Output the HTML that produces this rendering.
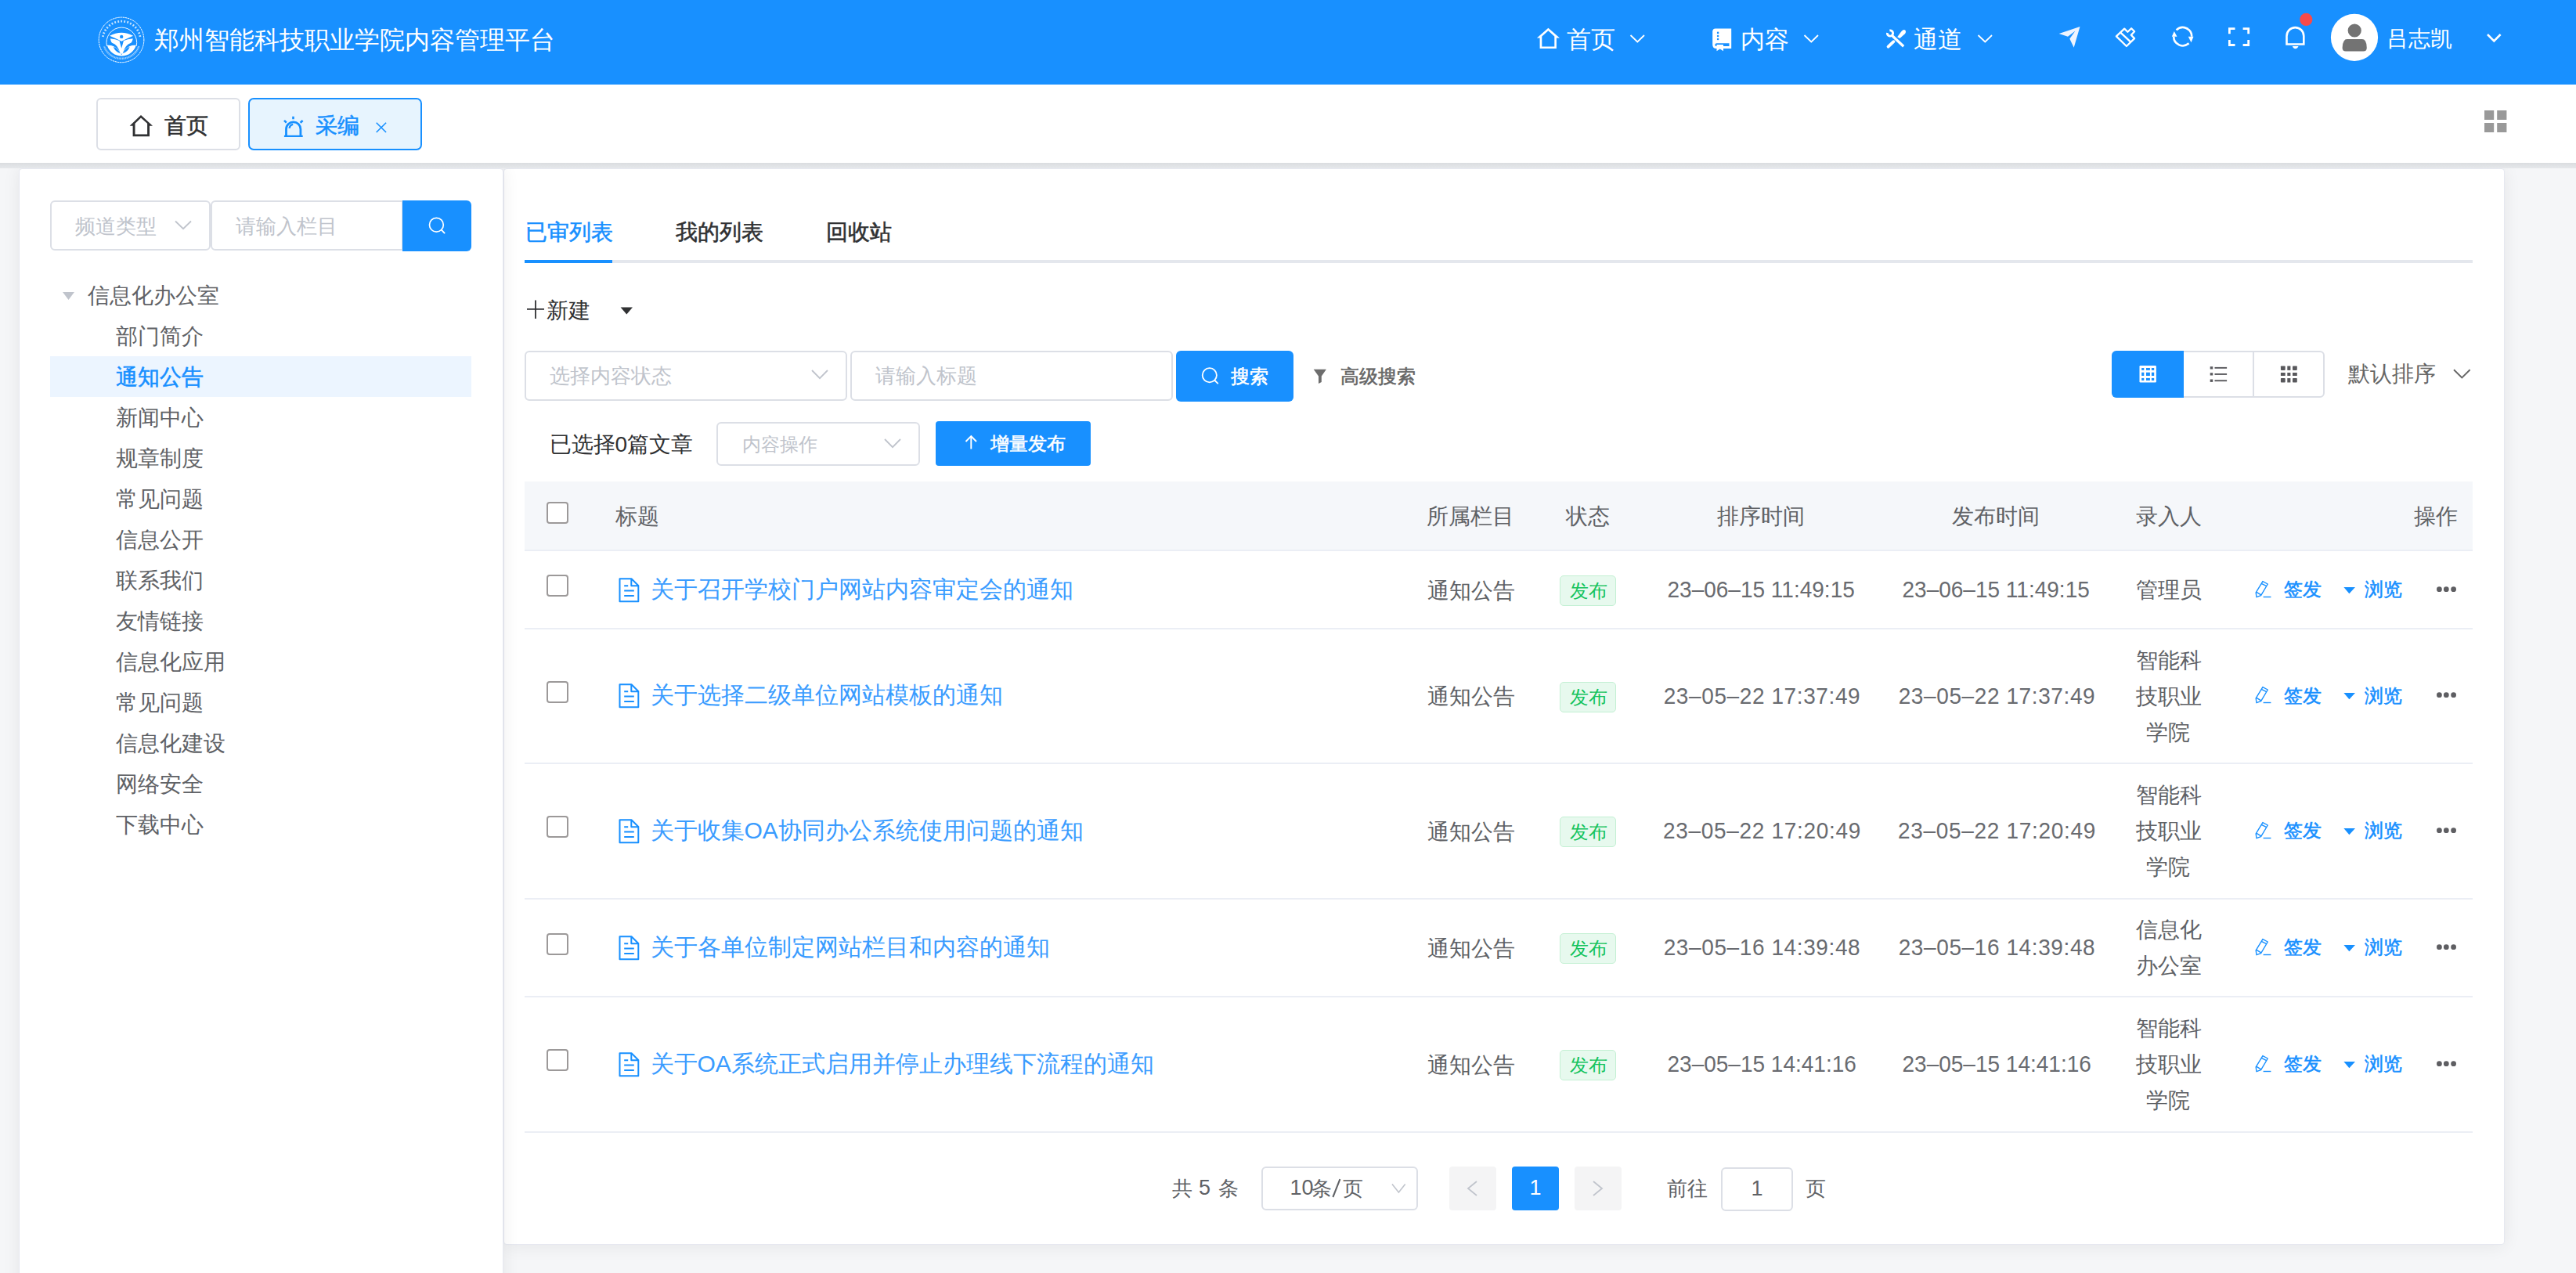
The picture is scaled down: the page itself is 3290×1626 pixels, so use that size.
<!DOCTYPE html><html><head><meta charset="utf-8"><style>
*{box-sizing:border-box;margin:0;padding:0}
html,body{width:3290px;height:1626px;overflow:hidden}
body{position:relative;background:#f5f6f8;font-family:"Liberation Sans",sans-serif;color:#606266}
.a{position:absolute;white-space:nowrap}
svg{position:absolute;overflow:visible}
#hdr{position:absolute;left:0;top:0;width:3290px;height:108px;background:#1890ff}
#tabs{position:absolute;left:0;top:108px;width:3290px;height:100px;background:#fff}
#shade{position:absolute;left:0;top:208px;width:3290px;height:7px;background:linear-gradient(#dadde0,#e6e8eb)}
#left{position:absolute;left:24px;top:215px;width:619px;height:1500px;background:#fff;border-radius:4px;box-shadow:0 0 22px rgba(0,0,0,.07);border:1px solid #e6e8f0}
#main{position:absolute;left:643px;top:215px;width:2556px;height:1375px;background:#fff;border-radius:4px;box-shadow:0 2px 22px rgba(0,0,0,.07);border:1px solid #e6e8f0}
.box{position:absolute;border:2px solid #dcdfe6;border-radius:6px;background:#fff}
</style></head><body>
<div id="hdr"></div>
<svg style="left:120px;top:16px" width="70" height="70" viewBox="0 0 1273 1273">
 <g fill="none" stroke="#fff">
  <circle cx="637" cy="635" r="524" stroke-width="18" stroke-dasharray="46 12"/>
  <path d="M207,564 A440,440 0 0 1 1073,564" stroke-width="50" stroke-dasharray="34 40" opacity=".75"/>
  <path d="M1044,787 A430,430 0 0 1 236,787" stroke-width="44" stroke-dasharray="14 12" opacity=".7"/>
  <path d="M300,780 A352,352 0 1 1 985,780" stroke-width="17"/>
 </g>
 <path fill="#fff" d="M365,540 Q640,395 910,540 Q770,600 640,668 Q510,600 365,540 Z"/>
 <circle cx="640" cy="562" r="40" fill="#1890ff"/>
 <path fill="#fff" d="M380,605 Q500,615 590,655 L640,830 L690,655 Q780,615 905,605 Q885,690 860,705 Q720,745 665,960 L615,960 Q560,745 420,705 Q395,690 380,605 Z"/>
 <path fill="#fff" d="M305,760 A352,352 0 0 0 979,760 Q830,745 715,860 L640,985 L565,860 Q450,745 305,760 Z"/>
 <path fill="#1890ff" d="M450,800 Q550,815 612,950 Q495,915 450,800 Z M830,800 Q730,815 668,950 Q785,915 830,800 Z"/>
</svg>
<div class="a" style="left:196.8px;top:34.6px;font-size:32px;line-height:32px;color:#fff;">郑州智能科技职业学院内容管理平台</div>
<svg style="left:1962px;top:35px" width="31" height="28" viewBox="0 0 31 28"><path fill="#fff" fill-rule="evenodd" d="M15.4,0.8 L30,13.6 L25.9,13.6 L25.9,27 L4.6,27 L4.6,13.6 L0.9,13.6 Z M15.4,4.2 L7.3,11.6 L7.3,24.4 L23.3,24.4 L23.3,11.6 Z"/></svg>
<div class="a" style="left:2000.5px;top:35.1px;font-size:31px;line-height:31px;color:#fff;">首页</div>
<svg style="left:2080px;top:43px" width="22" height="13" viewBox="0 0 22 13"><path d="M2.5,2 L11.3,10.5 L20,2" fill="none" stroke="#fff" stroke-width="1.8"/></svg>
<svg style="left:2186px;top:36px" width="27" height="30" viewBox="0 0 27 30">
 <path fill="#fff" d="M5,0.6 L25.2,0.6 L25.2,26 L6,26 Q1.2,26 1.2,21 L1.2,4.6 Q1.2,0.6 5,0.6 Z"/>
 <circle cx="8.1" cy="5.9" r="1.3" fill="#1890ff"/><circle cx="8.1" cy="10" r="1.3" fill="#1890ff"/><circle cx="8.1" cy="14" r="1.3" fill="#1890ff"/>
 <path fill="#1890ff" d="M6.5,19.3 L22.5,19.3 L22.5,23 L6.5,23 Q4.4,23 4.4,21.15 Q4.4,19.3 6.5,19.3 Z"/>
 <path fill="#fff" d="M6.5,21 L15,21 L15,29.2 L10.75,26.6 L6.5,29.2 Z"/>
</svg>
<div class="a" style="left:2223.3px;top:35.1px;font-size:31px;line-height:31px;color:#fff;">内容</div>
<svg style="left:2302px;top:43px" width="22" height="13" viewBox="0 0 22 13"><path d="M2.5,2 L11.3,10.5 L20,2" fill="none" stroke="#fff" stroke-width="1.8"/></svg>
<svg style="left:2405px;top:35px" width="32" height="30" viewBox="2405 35 32 30">
 <path d="M2413.4,38.95 A3.6,3.6 0 1 1 2410.45,41.9" fill="none" stroke="#fff" stroke-width="2.9"/>
 <path d="M2416.3,45.3 L2431.2,59.2" stroke="#fff" stroke-width="3.3"/>
 <path d="M2423.2,47.2 L2428.3,40.3 Q2431.3,37 2433.4,38.7 Q2435,40.8 2432.6,43.6 L2426.4,48.9 Z" fill="#fff"/>
 <path d="M2411.6,59.6 L2418.4,53.2" stroke="#fff" stroke-width="3.9" stroke-linecap="round"/>
</svg>
<div class="a" style="left:2444.2px;top:35.1px;font-size:31px;line-height:31px;color:#fff;">通道</div>
<svg style="left:2524px;top:43px" width="22" height="13" viewBox="0 0 22 13"><path d="M2.5,2 L11.3,10.5 L20,2" fill="none" stroke="#fff" stroke-width="1.8"/></svg>
<svg style="left:2620px;top:20px" width="200" height="55" viewBox="2620 20 200 55">
 <path fill="#eef4ff" d="M2656.5,34 L2629.7,42.9 L2641,46.8 L2650.5,39.5 L2643.3,49.5 L2648.7,60.8 Z"/>
 <path fill="none" stroke="#fff" stroke-width="2.3" stroke-linejoin="round" d="M2702.9,46.4 L2713.2,36.6 L2717.4,40.8 L2722.1,36.2 L2726.1,40.2 L2721.8,44.7 L2726.1,49.1 L2715.9,59 Z"/>
 <path stroke="#fff" stroke-width="2.3" d="M2708.4,41.7 L2721.2,53.6"/>
 <path fill="none" stroke="#fff" stroke-width="2.6" d="M2779.6,38.4 A11.5,11.5 0 0 1 2799.2,46.8"/>
 <path fill="none" stroke="#fff" stroke-width="2.6" d="M2795.5,55.3 A11.5,11.5 0 0 1 2776.2,46.8"/>
 <path fill="#fff" d="M2776.8,40 L2780.5,46.8 L2773.8,46.8 Z M2798.5,54.2 L2794.8,46.8 L2801.5,46.8 Z"/>
</svg>
<svg style="left:2840px;top:30px" width="40" height="35" viewBox="2840 30 40 35">
 <path fill="none" stroke="#fff" stroke-width="2.8" d="M2847.4,43.2 L2847.4,36.6 L2854.5,36.6 M2864.6,36.6 L2871.7,36.6 L2871.7,43.2 M2871.7,51 L2871.7,57.5 L2864.6,57.5 M2854.5,57.5 L2847.4,57.5 L2847.4,51"/>
</svg>
<svg style="left:2910px;top:10px" width="50" height="60" viewBox="2910 10 50 60">
 <path fill="none" stroke="#fff" stroke-width="2.6" d="M2920.5,56.5 L2920.5,46 A10.9,10.9 0 0 1 2942.3,46 L2942.3,56.5 Z"/>
 <path fill="#fff" d="M2927.8,59.1 L2935.5,59.1 Q2934.5,62.2 2931.6,62.2 Q2928.8,62.2 2927.8,59.1 Z"/>
 <circle cx="2945.3" cy="24.9" r="8.1" fill="#f74a4a"/>
</svg>
<svg style="left:2970px;top:10px" width="80" height="80" viewBox="2970 10 80 80">
 <circle cx="3007" cy="47.8" r="30.1" fill="#fff"/>
 <circle cx="3007.2" cy="39" r="8.6" fill="#737373"/>
 <path fill="#737373" d="M2997.5,50.1 L3016.8,50.1 Q3019.5,50.1 3021,52.5 Q3022.8,55.5 3022.8,61 Q3022.8,65.5 3018.5,65.5 L2996,65.5 Q2991.6,65.5 2991.6,61 Q2991.6,55.5 2993.6,52.5 Q2995,50.1 2997.5,50.1 Z"/>
</svg>
<div class="a" style="left:3047.5px;top:35.8px;font-size:28px;line-height:28px;color:#fff;">吕志凯</div>
<svg style="left:3172px;top:40px" width="26" height="17" viewBox="0 0 26 17"><path d="M5,4 L13.3,12.3 L21.6,4" fill="none" stroke="#fff" stroke-width="2.6"/></svg>
<div id="main"></div>
<div class="a" style="left:671.4px;top:283.3px;font-size:28px;line-height:28px;color:#1890ff;-webkit-text-stroke:0.55px currentColor;">已审列表</div>
<div class="a" style="left:862.5px;top:283.3px;font-size:28px;line-height:28px;color:#303133;-webkit-text-stroke:0.55px currentColor;">我的列表</div>
<div class="a" style="left:1055.3px;top:283.3px;font-size:28px;line-height:28px;color:#303133;-webkit-text-stroke:0.55px currentColor;">回收站</div>
<div class="a" style="left:670px;top:332px;width:2488px;height:4px;background:#e4e7ed"></div>
<div class="a" style="left:670px;top:332px;width:112px;height:4px;background:#1890ff"></div>
<svg style="left:670px;top:380px" width="30" height="30" viewBox="670 380 30 30"><path d="M673,394.8 L695,394.8 M684,383.4 L684,407" stroke="#303133" stroke-width="1.8"/></svg>
<div class="a" style="left:698.0px;top:382.7px;font-size:28px;line-height:28px;color:#303133;">新建</div>
<svg style="left:790px;top:390px" width="20" height="14" viewBox="790 390 20 14"><path d="M792.6,392.6 L808,392.6 L800.3,401.6 Z" fill="#303133"/></svg>
<div class="box" style="left:670px;top:448px;width:412px;height:64px"></div>
<div class="a" style="left:702.0px;top:467.3px;font-size:26px;line-height:26px;color:#c0c4cc;">选择内容状态</div>
<svg style="left:1034px;top:470px" width="26" height="18" viewBox="0 0 26 18"><path d="M3,3 L13,13.2 L23,3" fill="none" stroke="#c0c4cc" stroke-width="1.8"/></svg>
<div class="box" style="left:1086px;top:448px;width:412px;height:64px"></div>
<div class="a" style="left:1118.0px;top:467.3px;font-size:26px;line-height:26px;color:#c0c4cc;">请输入标题</div>
<div class="a" style="left:1502px;top:448px;width:150px;height:65px;background:#1890ff;border-radius:6px"></div>
<svg style="left:1530px;top:465px" width="30" height="30" viewBox="1530 465 30 30"><circle cx="1544.8" cy="479.3" r="9.1" fill="none" stroke="#fff" stroke-width="1.8"/><path d="M1551.5,486 L1555.3,489.6" stroke="#fff" stroke-width="1.9" stroke-linecap="round"/></svg>
<div class="a" style="left:1571.8px;top:468.7px;font-size:24px;line-height:24px;color:#fff;-webkit-text-stroke:0.55px currentColor;">搜索</div>
<svg style="left:1675px;top:469px" width="22" height="24" viewBox="1675 469 22 24"><path d="M1677.7,471.8 L1693.9,471.8 L1687.8,480.5 L1687.8,488 L1684,490 L1684,480.5 Z" fill="#6d6d6d"/></svg>
<div class="a" style="left:1712.0px;top:469.3px;font-size:24px;line-height:24px;color:#666;-webkit-text-stroke:0.55px currentColor;">高级搜索</div>
<div class="a" style="left:2697px;top:448px;width:272px;height:60px;border:2px solid #dcdfe6;border-radius:6px;background:#fff"></div>
<div class="a" style="left:2697px;top:448px;width:92px;height:60px;background:#1890ff;border-radius:6px 0 0 6px"></div>
<div class="a" style="left:2877px;top:449px;width:2px;height:58px;background:#dcdfe6"></div>
<svg style="left:2730px;top:465px" width="26" height="26" viewBox="2730 465 26 26">
 <rect x="2732.5" y="467" width="21.4" height="21.5" rx="1.2" fill="#fff"/>
 <g fill="#1890ff">
 <rect x="2735.2" y="470" width="3.1" height="2.9"/><rect x="2741" y="470" width="4.9" height="2.9"/><rect x="2747.9" y="470" width="3.3" height="2.9"/>
 <rect x="2735.2" y="475.7" width="3.1" height="4.3"/><rect x="2741" y="475.7" width="4.9" height="4.3"/><rect x="2747.9" y="475.7" width="3.3" height="4.3"/>
 <rect x="2735.2" y="482.9" width="3.1" height="3.1"/><rect x="2741" y="482.9" width="4.9" height="3.1"/><rect x="2747.9" y="482.9" width="3.3" height="3.1"/>
 </g>
</svg>
<svg style="left:2820px;top:465px" width="28" height="26" viewBox="2820 465 28 26">
 <g fill="#58585c">
 <rect x="2822.7" y="468.2" width="3.5" height="3.3"/><rect x="2822.7" y="476.2" width="3.5" height="3.3"/><rect x="2822.7" y="484.5" width="3.5" height="3.4"/>
 <rect x="2828.5" y="468.9" width="15.6" height="1.9"/><rect x="2828.5" y="477" width="15.6" height="1.9"/><rect x="2828.5" y="485.3" width="15.6" height="1.9"/>
 </g>
</svg>
<svg style="left:2910px;top:465px" width="26" height="26" viewBox="2910 465 26 26">
 <g fill="#58585c">
 <rect x="2912.9" y="467.5" width="5.8" height="5.4" rx=".8"/><rect x="2921.3" y="467.5" width="4.1" height="5.4"/><rect x="2928" y="467.5" width="5.8" height="5.4" rx=".8"/>
 <rect x="2912.9" y="476" width="5.8" height="4"/><rect x="2921.3" y="476" width="4.1" height="4"/><rect x="2928" y="476" width="5.8" height="4"/>
 <rect x="2912.9" y="483.1" width="5.8" height="5.4" rx=".8"/><rect x="2921.3" y="483.1" width="4.1" height="5.4"/><rect x="2928" y="483.1" width="5.8" height="5.4" rx=".8"/>
 </g>
</svg>
<div class="a" style="left:2999.3px;top:463.6px;font-size:28px;line-height:28px;color:#666;">默认排序</div>
<svg style="left:3131px;top:469px" width="28" height="17" viewBox="3131 469 28 17"><path d="M3134,472.3 L3144.3,482.4 L3154.6,472.3" fill="none" stroke="#666" stroke-width="1.9"/></svg>
<div class="a" style="left:701.5px;top:554.3px;font-size:28px;line-height:28px;color:#303133;">已选择0篇文章</div>
<div class="box" style="left:915px;top:539px;width:260px;height:56px"></div>
<div class="a" style="left:947.7px;top:555.7px;font-size:24px;line-height:24px;color:#c0c4cc;">内容操作</div>
<svg style="left:1127px;top:558px" width="26" height="18" viewBox="0 0 26 18"><path d="M3,3 L13,13.2 L23,3" fill="none" stroke="#c0c4cc" stroke-width="1.8"/></svg>
<div class="a" style="left:1195px;top:538px;width:198px;height:57px;background:#1890ff;border-radius:4px"></div>
<svg style="left:1230px;top:553px" width="22" height="24" viewBox="1230 553 22 24"><path d="M1240.3,573.6 L1240.3,557.5 M1233.5,564 L1240.3,557 L1247,564" fill="none" stroke="#fff" stroke-width="1.9"/></svg>
<div class="a" style="left:1264.6px;top:555.3px;font-size:24px;line-height:24px;color:#fff;-webkit-text-stroke:0.55px currentColor;">增量发布</div>
<div class="a" style="left:670px;top:615px;width:2488px;height:88px;background:#f5f7fa"></div>
<div class="a" style="left:670px;top:702px;width:2488px;height:2px;background:#ebeef5"></div>
<div class="a" style="left:698px;top:641px;width:28px;height:28px;border:2px solid #9c9999;border-radius:4px;background:#fff"></div>
<div class="a" style="left:786.0px;top:645.8px;font-size:28px;line-height:28px;color:#606266;">标题</div>
<div class="a" style="left:1822.0px;top:645.8px;font-size:28px;line-height:28px;color:#606266;">所属栏目</div>
<div class="a" style="left:2000.0px;top:645.8px;font-size:28px;line-height:28px;color:#606266;">状态</div>
<div class="a" style="left:2192.5px;top:645.8px;font-size:28px;line-height:28px;color:#606266;">排序时间</div>
<div class="a" style="left:2492.9px;top:645.8px;font-size:28px;line-height:28px;color:#606266;">发布时间</div>
<div class="a" style="left:2727.5px;top:645.8px;font-size:28px;line-height:28px;color:#606266;">录入人</div>
<div class="a" style="left:3082.7px;top:645.8px;font-size:28px;line-height:28px;color:#606266;">操作</div>
<div class="a" style="left:670px;top:802px;width:2488px;height:2px;background:#ebeef5"></div>
<div class="a" style="left:698px;top:734px;width:28px;height:28px;border:2px solid #9c9999;border-radius:4px;background:#fff"></div>
<svg style="left:788px;top:736.5px" width="32" height="34" viewBox="0 0 32 34"><path fill="none" stroke="#1890ff" stroke-width="2" stroke-linejoin="round" d="M3.5,2.3 L18.5,2.3 L27.3,11 L27.3,31.3 L3.5,31.3 Z M18.3,2.5 L18.3,11.2 L27.2,11.2"/><path stroke="#1890ff" stroke-width="2" d="M9.2,11.3 L14.2,11.3 M9.2,17.6 L21.8,17.6 M9.2,23.9 L21.8,23.9"/></svg>
<div class="a" style="left:830.5px;top:737.7px;font-size:30px;line-height:30px;color:#3a9cff;">关于召开学校门户网站内容审定会的通知</div>
<div class="a" style="left:1823.0px;top:740.6px;font-size:28px;line-height:28px;color:#606266;">通知公告</div>
<div class="a" style="left:1992px;top:735.4px;width:72px;height:39px;background:#e7f9ee;border:1.5px solid #c3f0d3;border-radius:5px"></div>
<div class="a" style="left:2004.7px;top:743.2px;font-size:24px;line-height:24px;color:#13c35c;">发布</div>
<div class="a" style="left:2129.5px;top:739.0999999999999px;font-size:28px;line-height:28px;letter-spacing:0.0px;color:#696b70;transform:scaleY(1.06);transform-origin:0 13.5px">23–06–15 11:49:15</div>
<div class="a" style="left:2429.5px;top:739.0999999999999px;font-size:28px;line-height:28px;letter-spacing:0.0px;color:#696b70;transform:scaleY(1.06);transform-origin:0 13.5px">23–06–15 11:49:15</div>
<div class="a" style="left:2727.5px;top:740.1px;font-size:28px;line-height:28px;color:#606266;">管理员</div>
<svg style="left:2878px;top:739.5px" width="26" height="26" viewBox="0 0 26 26"><path fill="none" stroke="#1890ff" stroke-width="1.4" stroke-linejoin="round" d="M11.9,2.6 L18.3,6 L9.6,20.6 L4,22.7 L3.2,16.8 Z M4,16.3 L9.8,19.9 M10.3,5.3 L16.7,8.7"/><path stroke="#1890ff" stroke-width="1.4" d="M12.6,22.5 L22.4,22.5"/></svg>
<div class="a" style="left:2916.8px;top:741.3px;font-size:24px;line-height:24px;color:#1890ff;-webkit-text-stroke:0.55px currentColor;">签发</div>
<svg style="left:2990px;top:747.5px" width="20" height="12" viewBox="0 0 20 12"><path d="M3.4,2.1 L18,2.1 L10.4,10.3 Z" fill="#1890ff"/></svg>
<div class="a" style="left:3020.3px;top:741.3px;font-size:24px;line-height:24px;color:#1890ff;-webkit-text-stroke:0.55px currentColor;">浏览</div>
<svg style="left:3108px;top:744.5px" width="32" height="16" viewBox="0 0 32 16"><g fill="#5e5e62"><circle cx="7.4" cy="7.7" r="3.4"/><circle cx="16.3" cy="7.7" r="3.4"/><circle cx="25.6" cy="7.7" r="3.4"/></g></svg>
<div class="a" style="left:670px;top:974px;width:2488px;height:2px;background:#ebeef5"></div>
<div class="a" style="left:698px;top:870px;width:28px;height:28px;border:2px solid #9c9999;border-radius:4px;background:#fff"></div>
<svg style="left:788px;top:872.0px" width="32" height="34" viewBox="0 0 32 34"><path fill="none" stroke="#1890ff" stroke-width="2" stroke-linejoin="round" d="M3.5,2.3 L18.5,2.3 L27.3,11 L27.3,31.3 L3.5,31.3 Z M18.3,2.5 L18.3,11.2 L27.2,11.2"/><path stroke="#1890ff" stroke-width="2" d="M9.2,11.3 L14.2,11.3 M9.2,17.6 L21.8,17.6 M9.2,23.9 L21.8,23.9"/></svg>
<div class="a" style="left:830.5px;top:873.2px;font-size:30px;line-height:30px;color:#3a9cff;">关于选择二级单位网站模板的通知</div>
<div class="a" style="left:1823.0px;top:876.1px;font-size:28px;line-height:28px;color:#606266;">通知公告</div>
<div class="a" style="left:1992px;top:870.9px;width:72px;height:39px;background:#e7f9ee;border:1.5px solid #c3f0d3;border-radius:5px"></div>
<div class="a" style="left:2004.7px;top:878.7px;font-size:24px;line-height:24px;color:#13c35c;">发布</div>
<div class="a" style="left:2124.7px;top:874.5999999999999px;font-size:28px;line-height:28px;letter-spacing:0.6px;color:#696b70;transform:scaleY(1.06);transform-origin:0 13.5px">23–05–22 17:37:49</div>
<div class="a" style="left:2424.7px;top:874.5999999999999px;font-size:28px;line-height:28px;letter-spacing:0.6px;color:#696b70;transform:scaleY(1.06);transform-origin:0 13.5px">23–05–22 17:37:49</div>
<div class="a" style="left:2727.5px;top:829.6px;font-size:28px;line-height:28px;color:#606266;">智能科</div>
<div class="a" style="left:2727.5px;top:875.6px;font-size:28px;line-height:28px;color:#606266;">技职业</div>
<div class="a" style="left:2741.0px;top:921.6px;font-size:28px;line-height:28px;color:#606266;">学院</div>
<svg style="left:2878px;top:875.0px" width="26" height="26" viewBox="0 0 26 26"><path fill="none" stroke="#1890ff" stroke-width="1.4" stroke-linejoin="round" d="M11.9,2.6 L18.3,6 L9.6,20.6 L4,22.7 L3.2,16.8 Z M4,16.3 L9.8,19.9 M10.3,5.3 L16.7,8.7"/><path stroke="#1890ff" stroke-width="1.4" d="M12.6,22.5 L22.4,22.5"/></svg>
<div class="a" style="left:2916.8px;top:876.8px;font-size:24px;line-height:24px;color:#1890ff;-webkit-text-stroke:0.55px currentColor;">签发</div>
<svg style="left:2990px;top:883.0px" width="20" height="12" viewBox="0 0 20 12"><path d="M3.4,2.1 L18,2.1 L10.4,10.3 Z" fill="#1890ff"/></svg>
<div class="a" style="left:3020.3px;top:876.8px;font-size:24px;line-height:24px;color:#1890ff;-webkit-text-stroke:0.55px currentColor;">浏览</div>
<svg style="left:3108px;top:880.0px" width="32" height="16" viewBox="0 0 32 16"><g fill="#5e5e62"><circle cx="7.4" cy="7.7" r="3.4"/><circle cx="16.3" cy="7.7" r="3.4"/><circle cx="25.6" cy="7.7" r="3.4"/></g></svg>
<div class="a" style="left:670px;top:1147px;width:2488px;height:2px;background:#ebeef5"></div>
<div class="a" style="left:698px;top:1042px;width:28px;height:28px;border:2px solid #9c9999;border-radius:4px;background:#fff"></div>
<svg style="left:788px;top:1044.5px" width="32" height="34" viewBox="0 0 32 34"><path fill="none" stroke="#1890ff" stroke-width="2" stroke-linejoin="round" d="M3.5,2.3 L18.5,2.3 L27.3,11 L27.3,31.3 L3.5,31.3 Z M18.3,2.5 L18.3,11.2 L27.2,11.2"/><path stroke="#1890ff" stroke-width="2" d="M9.2,11.3 L14.2,11.3 M9.2,17.6 L21.8,17.6 M9.2,23.9 L21.8,23.9"/></svg>
<div class="a" style="left:830.5px;top:1045.7px;font-size:30px;line-height:30px;color:#3a9cff;">关于收集OA协同办公系统使用问题的通知</div>
<div class="a" style="left:1823.0px;top:1048.6px;font-size:28px;line-height:28px;color:#606266;">通知公告</div>
<div class="a" style="left:1992px;top:1043.4px;width:72px;height:39px;background:#e7f9ee;border:1.5px solid #c3f0d3;border-radius:5px"></div>
<div class="a" style="left:2004.7px;top:1051.2px;font-size:24px;line-height:24px;color:#13c35c;">发布</div>
<div class="a" style="left:2123.9px;top:1047.1px;font-size:28px;line-height:28px;letter-spacing:0.7px;color:#696b70;transform:scaleY(1.06);transform-origin:0 13.5px">23–05–22 17:20:49</div>
<div class="a" style="left:2423.9px;top:1047.1px;font-size:28px;line-height:28px;letter-spacing:0.7px;color:#696b70;transform:scaleY(1.06);transform-origin:0 13.5px">23–05–22 17:20:49</div>
<div class="a" style="left:2727.5px;top:1002.1px;font-size:28px;line-height:28px;color:#606266;">智能科</div>
<div class="a" style="left:2727.5px;top:1048.1px;font-size:28px;line-height:28px;color:#606266;">技职业</div>
<div class="a" style="left:2741.0px;top:1094.1px;font-size:28px;line-height:28px;color:#606266;">学院</div>
<svg style="left:2878px;top:1047.5px" width="26" height="26" viewBox="0 0 26 26"><path fill="none" stroke="#1890ff" stroke-width="1.4" stroke-linejoin="round" d="M11.9,2.6 L18.3,6 L9.6,20.6 L4,22.7 L3.2,16.8 Z M4,16.3 L9.8,19.9 M10.3,5.3 L16.7,8.7"/><path stroke="#1890ff" stroke-width="1.4" d="M12.6,22.5 L22.4,22.5"/></svg>
<div class="a" style="left:2916.8px;top:1049.3px;font-size:24px;line-height:24px;color:#1890ff;-webkit-text-stroke:0.55px currentColor;">签发</div>
<svg style="left:2990px;top:1055.5px" width="20" height="12" viewBox="0 0 20 12"><path d="M3.4,2.1 L18,2.1 L10.4,10.3 Z" fill="#1890ff"/></svg>
<div class="a" style="left:3020.3px;top:1049.3px;font-size:24px;line-height:24px;color:#1890ff;-webkit-text-stroke:0.55px currentColor;">浏览</div>
<svg style="left:3108px;top:1052.5px" width="32" height="16" viewBox="0 0 32 16"><g fill="#5e5e62"><circle cx="7.4" cy="7.7" r="3.4"/><circle cx="16.3" cy="7.7" r="3.4"/><circle cx="25.6" cy="7.7" r="3.4"/></g></svg>
<div class="a" style="left:670px;top:1272px;width:2488px;height:2px;background:#ebeef5"></div>
<div class="a" style="left:698px;top:1192px;width:28px;height:28px;border:2px solid #9c9999;border-radius:4px;background:#fff"></div>
<svg style="left:788px;top:1193.5px" width="32" height="34" viewBox="0 0 32 34"><path fill="none" stroke="#1890ff" stroke-width="2" stroke-linejoin="round" d="M3.5,2.3 L18.5,2.3 L27.3,11 L27.3,31.3 L3.5,31.3 Z M18.3,2.5 L18.3,11.2 L27.2,11.2"/><path stroke="#1890ff" stroke-width="2" d="M9.2,11.3 L14.2,11.3 M9.2,17.6 L21.8,17.6 M9.2,23.9 L21.8,23.9"/></svg>
<div class="a" style="left:830.5px;top:1194.7px;font-size:30px;line-height:30px;color:#3a9cff;">关于各单位制定网站栏目和内容的通知</div>
<div class="a" style="left:1823.0px;top:1197.6px;font-size:28px;line-height:28px;color:#606266;">通知公告</div>
<div class="a" style="left:1992px;top:1192.4px;width:72px;height:39px;background:#e7f9ee;border:1.5px solid #c3f0d3;border-radius:5px"></div>
<div class="a" style="left:2004.7px;top:1200.2px;font-size:24px;line-height:24px;color:#13c35c;">发布</div>
<div class="a" style="left:2124.7px;top:1196.1px;font-size:28px;line-height:28px;letter-spacing:0.6px;color:#696b70;transform:scaleY(1.06);transform-origin:0 13.5px">23–05–16 14:39:48</div>
<div class="a" style="left:2424.7px;top:1196.1px;font-size:28px;line-height:28px;letter-spacing:0.6px;color:#696b70;transform:scaleY(1.06);transform-origin:0 13.5px">23–05–16 14:39:48</div>
<div class="a" style="left:2727.5px;top:1174.1px;font-size:28px;line-height:28px;color:#606266;">信息化</div>
<div class="a" style="left:2727.5px;top:1220.1px;font-size:28px;line-height:28px;color:#606266;">办公室</div>
<svg style="left:2878px;top:1196.5px" width="26" height="26" viewBox="0 0 26 26"><path fill="none" stroke="#1890ff" stroke-width="1.4" stroke-linejoin="round" d="M11.9,2.6 L18.3,6 L9.6,20.6 L4,22.7 L3.2,16.8 Z M4,16.3 L9.8,19.9 M10.3,5.3 L16.7,8.7"/><path stroke="#1890ff" stroke-width="1.4" d="M12.6,22.5 L22.4,22.5"/></svg>
<div class="a" style="left:2916.8px;top:1198.3px;font-size:24px;line-height:24px;color:#1890ff;-webkit-text-stroke:0.55px currentColor;">签发</div>
<svg style="left:2990px;top:1204.5px" width="20" height="12" viewBox="0 0 20 12"><path d="M3.4,2.1 L18,2.1 L10.4,10.3 Z" fill="#1890ff"/></svg>
<div class="a" style="left:3020.3px;top:1198.3px;font-size:24px;line-height:24px;color:#1890ff;-webkit-text-stroke:0.55px currentColor;">浏览</div>
<svg style="left:3108px;top:1201.5px" width="32" height="16" viewBox="0 0 32 16"><g fill="#5e5e62"><circle cx="7.4" cy="7.7" r="3.4"/><circle cx="16.3" cy="7.7" r="3.4"/><circle cx="25.6" cy="7.7" r="3.4"/></g></svg>
<div class="a" style="left:670px;top:1445px;width:2488px;height:2px;background:#ebeef5"></div>
<div class="a" style="left:698px;top:1340px;width:28px;height:28px;border:2px solid #9c9999;border-radius:4px;background:#fff"></div>
<svg style="left:788px;top:1342.5px" width="32" height="34" viewBox="0 0 32 34"><path fill="none" stroke="#1890ff" stroke-width="2" stroke-linejoin="round" d="M3.5,2.3 L18.5,2.3 L27.3,11 L27.3,31.3 L3.5,31.3 Z M18.3,2.5 L18.3,11.2 L27.2,11.2"/><path stroke="#1890ff" stroke-width="2" d="M9.2,11.3 L14.2,11.3 M9.2,17.6 L21.8,17.6 M9.2,23.9 L21.8,23.9"/></svg>
<div class="a" style="left:830.5px;top:1343.7px;font-size:30px;line-height:30px;color:#3a9cff;">关于OA系统正式启用并停止办理线下流程的通知</div>
<div class="a" style="left:1823.0px;top:1346.6px;font-size:28px;line-height:28px;color:#606266;">通知公告</div>
<div class="a" style="left:1992px;top:1341.4px;width:72px;height:39px;background:#e7f9ee;border:1.5px solid #c3f0d3;border-radius:5px"></div>
<div class="a" style="left:2004.7px;top:1349.2px;font-size:24px;line-height:24px;color:#13c35c;">发布</div>
<div class="a" style="left:2129.5px;top:1345.1px;font-size:28px;line-height:28px;letter-spacing:0.0px;color:#696b70;transform:scaleY(1.06);transform-origin:0 13.5px">23–05–15 14:41:16</div>
<div class="a" style="left:2429.5px;top:1345.1px;font-size:28px;line-height:28px;letter-spacing:0.0px;color:#696b70;transform:scaleY(1.06);transform-origin:0 13.5px">23–05–15 14:41:16</div>
<div class="a" style="left:2727.5px;top:1300.1px;font-size:28px;line-height:28px;color:#606266;">智能科</div>
<div class="a" style="left:2727.5px;top:1346.1px;font-size:28px;line-height:28px;color:#606266;">技职业</div>
<div class="a" style="left:2741.0px;top:1392.1px;font-size:28px;line-height:28px;color:#606266;">学院</div>
<svg style="left:2878px;top:1345.5px" width="26" height="26" viewBox="0 0 26 26"><path fill="none" stroke="#1890ff" stroke-width="1.4" stroke-linejoin="round" d="M11.9,2.6 L18.3,6 L9.6,20.6 L4,22.7 L3.2,16.8 Z M4,16.3 L9.8,19.9 M10.3,5.3 L16.7,8.7"/><path stroke="#1890ff" stroke-width="1.4" d="M12.6,22.5 L22.4,22.5"/></svg>
<div class="a" style="left:2916.8px;top:1347.3px;font-size:24px;line-height:24px;color:#1890ff;-webkit-text-stroke:0.55px currentColor;">签发</div>
<svg style="left:2990px;top:1353.5px" width="20" height="12" viewBox="0 0 20 12"><path d="M3.4,2.1 L18,2.1 L10.4,10.3 Z" fill="#1890ff"/></svg>
<div class="a" style="left:3020.3px;top:1347.3px;font-size:24px;line-height:24px;color:#1890ff;-webkit-text-stroke:0.55px currentColor;">浏览</div>
<svg style="left:3108px;top:1350.5px" width="32" height="16" viewBox="0 0 32 16"><g fill="#5e5e62"><circle cx="7.4" cy="7.7" r="3.4"/><circle cx="16.3" cy="7.7" r="3.4"/><circle cx="25.6" cy="7.7" r="3.4"/></g></svg>
<div class="a" style="left:1496.9px;top:1504.9px;font-size:26px;line-height:26px;color:#606266;">共</div>
<div class="a" style="left:1531px;top:1504px;font-size:27px;line-height:27px;color:#606266">5</div>
<div class="a" style="left:1555.6px;top:1504.9px;font-size:26px;line-height:26px;color:#606266;">条</div>
<div class="box" style="left:1611px;top:1490px;width:200px;height:56px"></div>
<div class="a" style="left:1647.5px;top:1504px;font-size:27px;line-height:27px;color:#606266">10</div>
<div class="a" style="left:1675.2px;top:1504.9px;font-size:26px;line-height:26px;color:#606266;">条</div>
<svg style="left:1698px;top:1503px" width="18" height="30" viewBox="1698 1503 18 30"><path d="M1711.4,1506.2 L1702.4,1529" stroke="#606266" stroke-width="2.1"/></svg>
<div class="a" style="left:1714.6px;top:1504.9px;font-size:26px;line-height:26px;color:#606266;">页</div>
<svg style="left:1775px;top:1509px" width="24" height="16" viewBox="1775 1509 24 16"><path d="M1778,1512.4 L1786.4,1522.9 L1794.7,1512.4" fill="none" stroke="#c0c4cc" stroke-width="1.6"/></svg>
<div class="a" style="left:1851px;top:1490px;width:60px;height:56px;background:#f4f4f5;border-radius:4px"></div>
<svg style="left:1870px;top:1505px" width="20" height="26" viewBox="1870 1505 20 26"><path d="M1886,1509 L1875,1518 L1886,1527" fill="none" stroke="#c0c4cc" stroke-width="1.8"/></svg>
<div class="a" style="left:1931px;top:1490px;width:60px;height:56px;background:#1890ff;border-radius:4px"></div>
<div class="a" style="left:1931px;top:1504px;width:60px;text-align:center;font-size:27px;line-height:27px;color:#fff">1</div>
<div class="a" style="left:2011px;top:1490px;width:60px;height:56px;background:#f4f4f5;border-radius:4px"></div>
<svg style="left:2030px;top:1505px" width="20" height="26" viewBox="2030 1505 20 26"><path d="M2035,1509 L2046,1518 L2035,1527" fill="none" stroke="#c0c4cc" stroke-width="1.8"/></svg>
<div class="a" style="left:2129.0px;top:1504.9px;font-size:26px;line-height:26px;color:#606266;">前往</div>
<div class="box" style="left:2198px;top:1491px;width:92px;height:56px"></div>
<div class="a" style="left:2198px;top:1505px;width:92px;text-align:center;font-size:27px;line-height:27px;color:#606266">1</div>
<div class="a" style="left:2306.3px;top:1504.9px;font-size:26px;line-height:26px;color:#606266;">页</div>
<div id="left"></div>
<div class="box" style="left:64px;top:256px;width:205px;height:64px"></div>
<div class="a" style="left:96.0px;top:276.0px;font-size:26px;line-height:26px;color:#c0c4cc;">频道类型</div>
<svg style="left:221px;top:279px" width="26" height="17" viewBox="0 0 26 17"><path d="M3,3.5 L13,13.2 L23,3.5" fill="none" stroke="#c0c4cc" stroke-width="1.8"/></svg>
<div class="box" style="left:269px;top:256px;width:246px;height:64px;border-radius:6px 0 0 6px"></div>
<div class="a" style="left:301.3px;top:276.0px;font-size:26px;line-height:26px;color:#c0c4cc;">请输入栏目</div>
<div class="a" style="left:514px;top:256px;width:88px;height:65px;background:#1890ff;border-radius:0 6px 6px 0"></div>
<svg style="left:540px;top:270px" width="40" height="40" viewBox="540 270 40 40"><circle cx="557.4" cy="287.2" r="8.9" fill="none" stroke="#fff" stroke-width="1.7"/><path d="M563.8,293.7 L567.6,297.6" stroke="#fff" stroke-width="1.9" stroke-linecap="round"/></svg>
<svg style="left:78px;top:370px" width="20" height="16" viewBox="0 0 20 16"><path d="M2,3 L17,3 L9.5,13 Z" fill="#c0c4cc"/></svg>
<div class="a" style="left:112.2px;top:363.6px;font-size:28px;line-height:28px;color:#606266;">信息化办公室</div>
<div class="a" style="left:64px;top:455px;width:538px;height:52px;background:#ecf5ff"></div>
<div class="a" style="left:147.9px;top:415.9px;font-size:28px;line-height:28px;color:#606266;">部门简介</div>
<div class="a" style="left:147.9px;top:467.9px;font-size:28px;line-height:28px;color:#1890ff;-webkit-text-stroke:0.55px currentColor;">通知公告</div>
<div class="a" style="left:147.9px;top:519.9px;font-size:28px;line-height:28px;color:#606266;">新闻中心</div>
<div class="a" style="left:147.9px;top:571.9px;font-size:28px;line-height:28px;color:#606266;">规章制度</div>
<div class="a" style="left:147.9px;top:623.9px;font-size:28px;line-height:28px;color:#606266;">常见问题</div>
<div class="a" style="left:147.9px;top:675.9px;font-size:28px;line-height:28px;color:#606266;">信息公开</div>
<div class="a" style="left:147.9px;top:727.9px;font-size:28px;line-height:28px;color:#606266;">联系我们</div>
<div class="a" style="left:147.9px;top:779.9px;font-size:28px;line-height:28px;color:#606266;">友情链接</div>
<div class="a" style="left:147.9px;top:831.9px;font-size:28px;line-height:28px;color:#606266;">信息化应用</div>
<div class="a" style="left:147.9px;top:883.9px;font-size:28px;line-height:28px;color:#606266;">常见问题</div>
<div class="a" style="left:147.9px;top:935.9px;font-size:28px;line-height:28px;color:#606266;">信息化建设</div>
<div class="a" style="left:147.9px;top:987.9px;font-size:28px;line-height:28px;color:#606266;">网络安全</div>
<div class="a" style="left:147.9px;top:1039.9px;font-size:28px;line-height:28px;color:#606266;">下载中心</div>
<div id="tabs"></div>
<div class="box" style="left:123px;top:125px;width:184px;height:67px;border-color:#dcdfe6;border-width:2px;border-radius:6px"></div>
<svg style="left:165px;top:146px" width="31" height="29" viewBox="0 0 31 29"><path fill="#303133" fill-rule="evenodd" d="M15,1 L30,14.8 L26,14.8 L26,28.2 L4.6,28.2 L4.6,14.8 L0.6,14.8 Z M15,4.6 L7.5,11.8 L7.5,25.4 L23.1,25.4 L23.1,11.8 Z"/></svg>
<div class="a" style="left:209.5px;top:146.9px;font-size:28px;line-height:28px;color:#303133;-webkit-text-stroke:0.55px currentColor;">首页</div>
<div class="box" style="left:317px;top:125px;width:222px;height:67px;border-color:#1890ff;border-width:2.5px;border-radius:7px;background:#e7f4fe"></div>
<svg style="left:360px;top:146px" width="30" height="32" viewBox="360 146 30 32">
 <g fill="none" stroke="#1890ff">
  <path d="M362.9,173.9 L386.7,173.9" stroke-width="2.2"/>
  <path d="M365.5,173.9 L365.5,165 A9.2,9.2 0 0 1 383.9,165 L383.9,173.9" stroke-width="2.8"/>
  <path d="M369.6,163.8 A6,6 0 0 1 374.2,158.8" stroke-width="2.4"/>
  <path d="M374.5,148.7 L374.5,152.3 M363,153.8 L365.8,156.6 M386.6,154 L383.6,156.8" stroke-width="2.6"/>
 </g>
</svg>
<div class="a" style="left:403.0px;top:147.2px;font-size:28px;line-height:28px;color:#1890ff;-webkit-text-stroke:0.55px currentColor;">采编</div>
<svg style="left:478px;top:154px" width="18" height="18" viewBox="478 154 18 18"><path d="M480.7,156.8 L493.1,169 M493.1,156.8 L480.7,169" stroke="#1890ff" stroke-width="1.6" fill="none"/></svg>
<svg style="left:3173px;top:141px" width="29" height="28" viewBox="0 0 29 28"><g fill="#999"><rect x="0" y="0" width="12.2" height="12"/><rect x="16.2" y="0" width="12.2" height="12"/><rect x="0" y="16" width="12.2" height="12"/><rect x="16.2" y="16" width="12.2" height="12"/></g></svg>
<div id="shade"></div>
</body></html>
